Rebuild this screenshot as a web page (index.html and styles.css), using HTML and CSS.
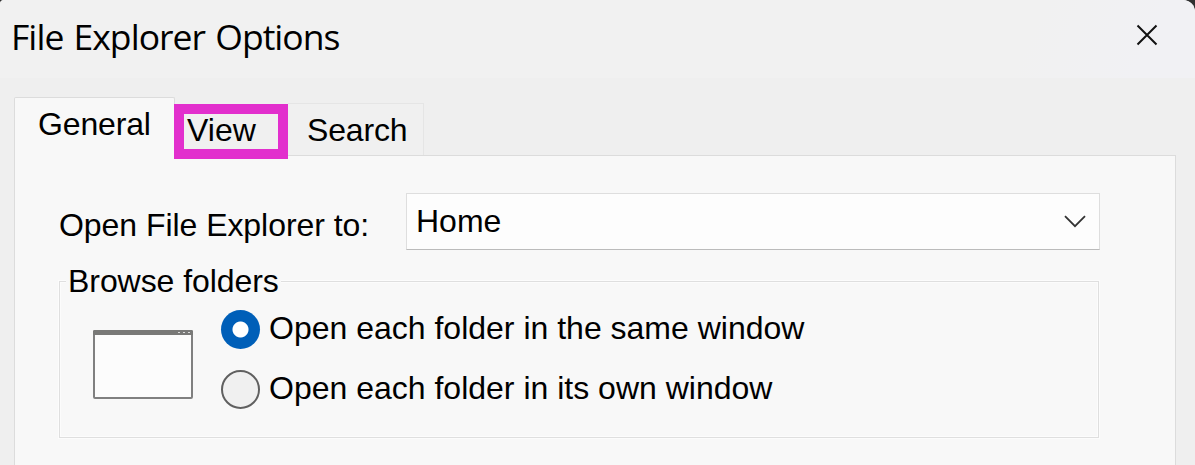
FILE: index.html
```html
<!DOCTYPE html>
<html lang="en">
<head>
<meta charset="utf-8">
<title>File Explorer Options</title>
<link rel="stylesheet" href="styles.css">
</head>
<body>
<main class="dialog">
  <header class="titlebar">
    <h1 class="title"><span>File Explorer Options</span></h1>
    <svg class="close" width="22" height="22" viewBox="0 0 22 22" role="img" aria-label="Close"><path d="M1.5 1.5 20.5 20.5M20.5 1.5 1.5 20.5"/></svg>
  </header>
  <nav class="tabs">
    <div class="tab tab-active"><span>General</span></div>
    <div class="tab tab-marked"><span>View</span></div>
    <div class="tab tab-search"><span>Search</span></div>
  </nav>
  <section class="panel">
    <div class="field">
      <span class="field-label">Open File Explorer to:</span>
      <div class="select">
        <span>Home</span>
        <svg class="chevron" width="22" height="13" viewBox="0 0 22 13"><path d="M1 1.2 11 11.2 21 1.2"/></svg>
      </div>
    </div>
    <section class="group">
      <h2 class="legend"><span>Browse folders</span></h2>
      <div class="group-body">
        <svg class="window-icon" width="100" height="69" viewBox="0 0 100 69">
          <rect class="frame" x="1" y="1" width="98" height="67" rx="1"/>
          <path class="bar" d="M1 0H99L100 1V5H0V1Z"/>
          <path class="dots" d="M85 2.5h2M90 2.5h2M95 2.5h2"/>
        </svg>
        <div class="options">
          <div class="option"><i class="radio radio-on"></i><span>Open each folder in the same window</span></div>
          <div class="option"><i class="radio"></i><span>Open each folder in its own window</span></div>
        </div>
      </div>
    </section>
  </section>
</main>
</body>
</html>
```
FILE: styles.css
```css
* { box-sizing: border-box; }
body {
  margin: 0;
  height: 465px;
  overflow: hidden;
  background: #303030;
  color: #000;
  font: 32px/36px "Liberation Sans", Arial, sans-serif;
  white-space: nowrap;
}
.dialog {
  height: 465px;
  display: flex;
  flex-direction: column;
  background: #efefef;
  border-radius: 4px 12px 0 0;
  overflow: hidden;
}
.titlebar {
  flex: none;
  height: 78px;
  padding: 0 37px 0 11px;
  display: flex;
  justify-content: space-between;
  background: linear-gradient(115deg, #f1f1f1 85%, #f1f1f4 95%);
}
.title {
  margin: 11px 0 0;
  font: 400 35.5px/50px "Open Sans", "Noto Sans", sans-serif;
  letter-spacing: -0.95px;
  word-spacing: 1.8px;
}
.close { margin-top: 24px; fill: none; stroke: #111; stroke-width: 2; }
.tabs { flex: none; height: 58px; margin: 19px 0 0 14px; display: flex; align-items: flex-start; }
.tab { display: flex; z-index: 1; }
.tab-active {
  width: 161px;
  height: 59px;
  padding: 8px 0 0 23px;
  background: #f8f8f8;
  border: 1px solid #dcdcdc;
  border-bottom: 0;
  border-radius: 2px 2px 0 0;
  letter-spacing: -0.15px;
}
.tab-marked {
  width: 114px;
  height: 55px;
  margin: 7px 0 0 -1px;
  padding-left: 3px;
  border: 10px solid #e22fcd;
  background: #f0f0f0;
}
.tab-marked span { margin-top: -2px; }
.tab-search {
  width: 136px;
  height: 52px;
  margin-top: 6px;
  padding: 8px 0 0 19px;
  background: #f0f0f0;
  border: 1px solid #e5e5e5;
  border-width: 1px 1px 0 0;
  letter-spacing: -0.15px;
}
.panel {
  flex: 1;
  width: 1162px;
  margin-left: 14px;
  padding: 37px 0 0 44px;
  background: #f8f8f8;
  border: 1px solid #dcdcdc;
  border-bottom: 0;
}
.field { display: flex; justify-content: space-between; width: 1041px; height: 57px; }
.field-label { margin-top: 14px; letter-spacing: -0.05px; }
.select {
  width: 694px;
  height: 57px;
  padding: 9px 13.5px 0 9px;
  display: flex;
  justify-content: space-between;
  background: #fdfdfd;
  border: 1px solid #dedede;
  border-bottom-color: #bbb;
}
.chevron { margin-top: 12px; fill: none; stroke: #333; stroke-width: 1.8; }
.group {
  width: 1040px;
  height: 157px;
  margin-top: 31px;
  border: 1px solid #dfdfdf;
  box-shadow: 0 0 0 1px #fcfcfc, inset 0 0 0 1px #fcfcfc;
}
.legend {
  width: 215px;
  height: 36px;
  margin: -19px 0 0 6px;
  padding-left: 2px;
  font: inherit;
  letter-spacing: -0.06px;
  background: #f8f8f8;
}
.group-body { display: flex; padding: 11px 0 0 33px; }
.window-icon { margin-top: 20px; }
.frame { fill: #fcfcfc; stroke: #808080; stroke-width: 2; }
.bar { fill: #797977; }
.dots { stroke: #ddd; stroke-width: 1; }
.options { display: flex; flex-direction: column; gap: 21px; margin-left: 28px; }
.option { display: flex; gap: 9px; height: 39px; }
.radio {
  width: 39px;
  height: 39px;
  border: 2px solid #606060;
  border-radius: 50%;
  background: #f0f0f0;
}
.radio-on {
  border: 0;
  background: radial-gradient(circle, #fff 7.5px, #005fb8 8.5px);
}
```
